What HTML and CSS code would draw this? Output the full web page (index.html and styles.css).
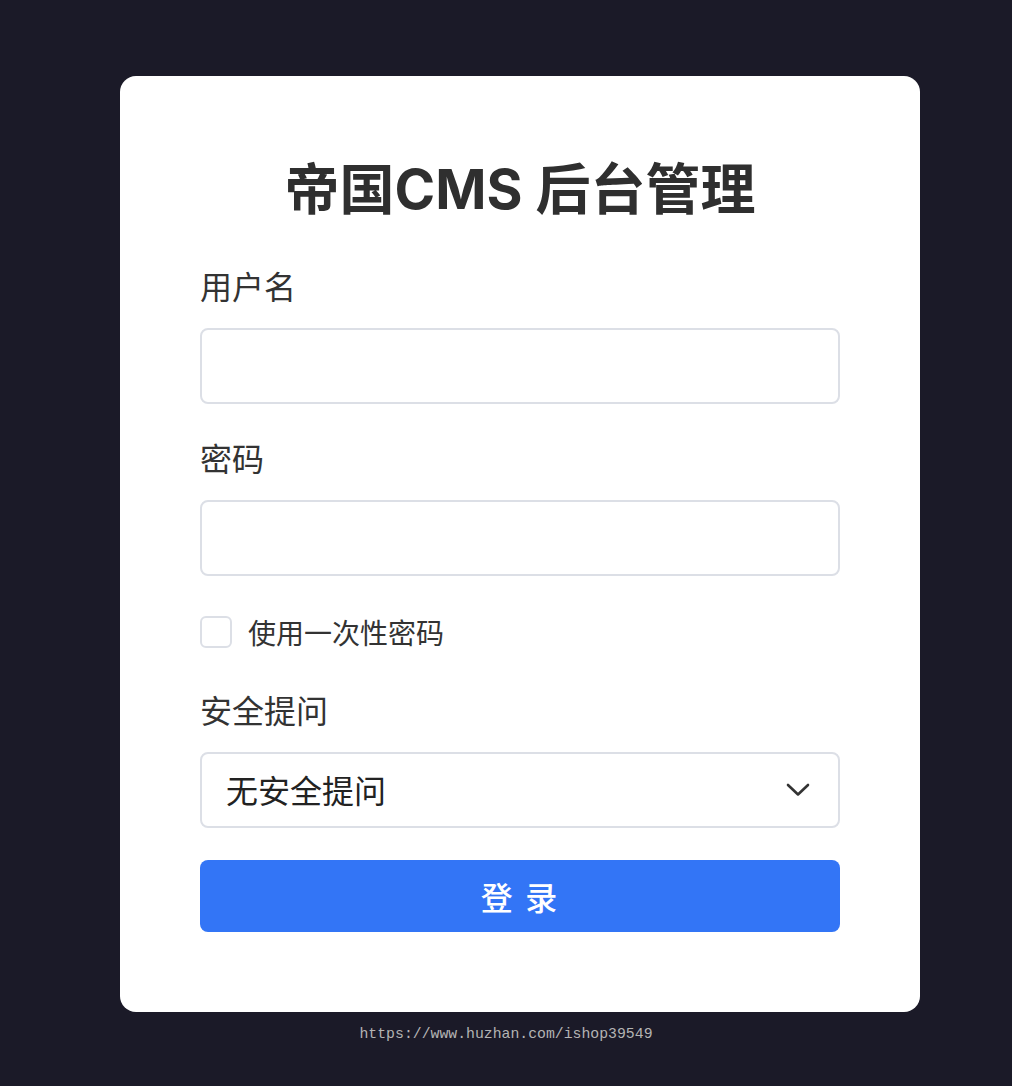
FILE: index.html
```html
<!DOCTYPE html>
<html lang="zh-CN">
<head>
<meta charset="utf-8">
<title>帝国CMS 后台管理</title>
<link rel="stylesheet" href="styles.css">
</head>
<body>
<main class="card">
  <h1 class="title">帝国CMS 后台管理</h1>
  <form class="form">
    <div class="field">
      <label class="label" for="u">用户名</label>
      <input class="input" id="u" type="text">
    </div>
    <div class="field">
      <label class="label" for="p">密码</label>
      <input class="input" id="p" type="password">
    </div>
    <label class="check">
      <span class="box"></span>
      <span class="check-text">使用一次性密码</span>
    </label>
    <div class="field">
      <label class="label">安全提问</label>
      <div class="select">
        <span class="select-text">无安全提问</span>
        <svg class="chev" width="24" height="16" viewBox="0 0 24 16"><path d="M2 3 L12 12.5 L22 3" fill="none" stroke="#333" stroke-width="2.6" stroke-linecap="round" stroke-linejoin="round"/></svg>
      </div>
    </div>
    <button class="btn" type="button">登 录</button>
  </form>
</main>
<footer class="foot">https://www.huzhan.com/ishop39549</footer>
</body>
</html>
```
FILE: styles.css
```css
html, body {
  margin: 0;
  padding: 0;
}
body {
  background: #1b1a28;
  min-height: 1086px;
  font-family: Inter, "Noto Sans CJK SC", sans-serif;
  color: #333;
  display: flex;
  flex-direction: column;
}
.card {
  box-sizing: border-box;
  width: 800px;
  margin: 76px 0 0 120px;
  background: #fff;
  border-radius: 16px;
  padding: 80px 80px 80px;
}
.title {
  margin: 0 0 41px;
  font-size: 55px;
  line-height: 67px;
  font-weight: 700;
  text-align: center;
  color: #2f2f2f;
}
.form {
  display: flex;
  flex-direction: column;
}
.field {
  display: flex;
  flex-direction: column;
  margin-bottom: 32px;
}
.label {
  font-size: 32px;
  line-height: 48px;
  margin-bottom: 16px;
  color: #333;
}
.input {
  box-sizing: border-box;
  height: 76px;
  border: 2px solid #dcdfe6;
  border-radius: 8px;
  outline: none;
  padding: 0 24px;
  font-size: 32px;
}
.check {
  display: flex;
  align-items: center;
  height: 32px;
  margin: 8px 0 40px;
}
.box {
  box-sizing: border-box;
  width: 32px;
  height: 32px;
  border: 2px solid #dcdfe6;
  border-radius: 6px;
  margin-right: 16px;
}
.check-text {
  font-size: 28px;
  line-height: 32px;
  padding-top: 3px;
  color: #333;
}
.select {
  box-sizing: border-box;
  height: 76px;
  border: 2px solid #dcdfe6;
  border-radius: 8px;
  padding: 0 28px 0 24px;
  display: flex;
  align-items: center;
  justify-content: space-between;
}
.select-text {
  font-size: 32px;
  color: #222;
  padding-bottom: 3px;
}
.chev {
  display: block;
}
.btn {
  height: 72px;
  border: none;
  border-radius: 8px;
  background: #3375f6;
  color: #fff;
  font-family: inherit;
  font-size: 32px;
  font-weight: 500;
  letter-spacing: 2px;
}
.foot {
  margin-top: 12px;
  text-align: center;
  font-family: "Liberation Mono", monospace;
  font-size: 14.8px;
  line-height: 20px;
  color: #b4b4b4;
}
```
